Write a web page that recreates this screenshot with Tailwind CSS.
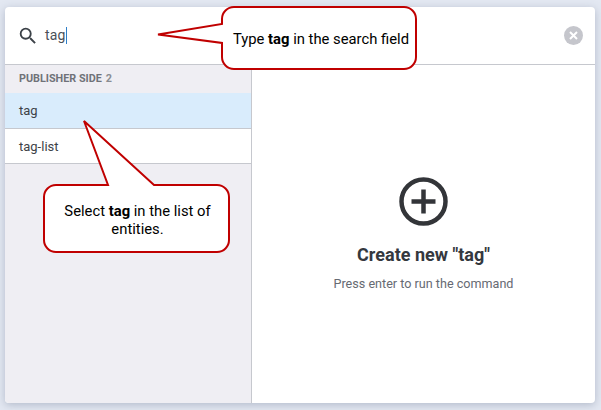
<!DOCTYPE html>
<html>
<head>
<meta charset="utf-8">
<script src="https://cdn.jsdelivr.net/npm/@tailwindcss/browser@4"></script>
</head>
<body class="w-[601px] h-[410px] overflow-hidden bg-[#e3e8f2] font-['Roboto',sans-serif]">
<div class="relative w-[601px] h-[410px] pt-[7px] px-[5px]">
    <!-- Card -->
    <div class="w-[590px] h-[396px] bg-white rounded-[4px] overflow-hidden flex flex-col shadow-[0_2px_8px_rgba(90,100,125,0.35)]">
        <!-- Search -->
        <div class="h-[58px] shrink-0 border-b border-[#c6c8ce] flex items-center pl-[12px] pr-[12px]">
            <svg class="w-[22px] h-[22px] text-[#3c4248]" viewBox="0 0 24 24" fill="currentColor"><path d="M15.5 14h-.79l-.28-.27A6.47 6.47 0 0 0 16 9.5 6.5 6.5 0 1 0 9.5 16c1.61 0 3.09-.59 4.23-1.57l.27.28v.79l5 4.99L20.49 19l-4.99-5zm-6 0C7.01 14 5 11.99 5 9.5S7.01 5 9.5 5 14 7.01 14 9.5 11.99 14 9.5 14z"/></svg>
            <span class="ml-[6px] text-[14px] text-[#4a5058] tracking-[0.2px]">tag</span>
            <span class="w-px h-[17px] bg-[#2f7fc8]"></span>
            <svg class="ml-auto w-[19px] h-[19px]" viewBox="0 0 19 19"><circle cx="9.5" cy="9.5" r="9.5" fill="#c5c6cc"/><path d="M6 6l7 7M13 6l-7 7" stroke="#fff" stroke-width="2"/></svg>
        </div>
        <div class="flex-1 flex min-h-0">
            <!-- List -->
            <div class="w-[247px] shrink-0 bg-[#efeef3] border-r border-[#c6c8ce]">
                <div class="h-[28px] flex items-center pl-[14px] text-[10.8px] font-bold text-[#6f7278] gap-[4px]">
                    <span>PUBLISHER SIDE</span><span class="text-[#8a8d92]">2</span>
                </div>
                <div class="h-[36px] bg-[#d9ecfc] border-b border-[#c6c8ce] flex items-center pl-[14px] text-[13px] text-[#3d4247]">tag</div>
                <div class="h-[35px] bg-white border-b border-[#c6c8ce] flex items-center pl-[14px] pt-[1px] text-[13px] text-[#3d4247]">tag-list</div>
            </div>
            <!-- Empty state -->
            <div class="flex-1 flex flex-col items-center pt-[112px]">
                <svg class="w-[49px] h-[49px]" viewBox="0 0 49 49" fill="none" stroke="#333539"><circle cx="24.5" cy="24.5" r="22" stroke-width="4.5"/><path d="M12.5 24.5h24M24.5 12.5v24" stroke-width="4.5"/></svg>
                <h2 class="mt-[17px] text-[18px] leading-[24px] font-bold text-[#34383e]">Create new "tag"</h2>
                <p class="mt-[8px] text-[12.6px] leading-[18px] text-[#666a72]">Press enter to run the command</p>
            </div>
        </div>
    </div>

    <!-- Callouts -->
    <svg class="absolute left-0 top-0 pointer-events-none" width="601" height="410" fill="#fff" stroke="#c00000" stroke-width="2">
        <path d="M234 7H404a12 12 0 0 1 12 12V57a12 12 0 0 1-12 12H234a12 12 0 0 1-12-12V43L158 34.500L222 24V19a12 12 0 0 1 12-12Z"/>
        <path d="M56 185H108L84 121L154 185H217a12 12 0 0 1 12 12V240a12 12 0 0 1-12 12H56a12 12 0 0 1-12-12V197a12 12 0 0 1 12-12Z"/>
    </svg>
    <div class="absolute left-[222px] top-[7px] w-[194px] h-[62px] flex items-center justify-center text-[14.8px] text-black pt-[2px] pl-[4px] whitespace-nowrap">
        <span>Type <b>tag</b> in the search field</span>
    </div>
    <div class="absolute left-[44px] top-[185px] w-[185px] h-[67px] flex items-center justify-center text-center text-[14.8px] leading-[18px] text-black pl-[16px] pr-[14px] pt-[3px]">
        <span>Select <b>tag</b> in the list of entities.</span>
    </div>
</div>
</body>
</html>
